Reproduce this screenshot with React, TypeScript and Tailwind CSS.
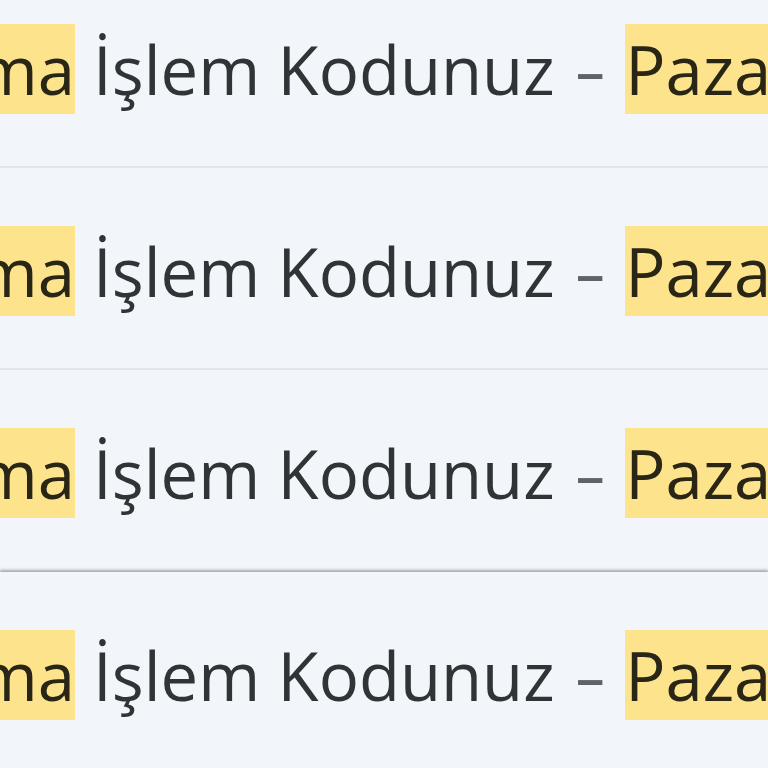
const rows = [0, 1, 2, 3];

function Row({ hovered, last }: { hovered?: boolean; last?: boolean }) {
  return (
    <div
      className={
        "relative h-[202px] bg-[#f2f5fa] overflow-hidden " +
        (last ? "" : "border-b-2 border-[#e1e4e9] ") +
        (hovered ? "z-10 shadow-[0_-2px_3px_0_rgba(60,64,67,0.35)]" : "")
      }
    >
      <div className="flex pt-[58px] text-[67px] leading-[90px] text-[#303437] whitespace-nowrap font-['Open_Sans',sans-serif]">
        <div className="w-[75px] shrink-0 flex justify-end">
          <span className="bg-[#fde48c] text-[#2a2616]">Pazarama</span>
        </div>
        <span className="ml-[18px]">İşlem Kodunuz</span>
        <span className="ml-[19px] inline-block origin-left scale-x-150 text-[#5f6368]">-</span>
        <span className="ml-[30px] bg-[#fde48c] text-[#2a2616]">Pazarama</span>
      </div>
    </div>
  );
}

export default function App() {
  return (
    <div className="w-[768px] h-[768px] overflow-hidden bg-[#f2f5fa]">
      <div className="-mt-[34px] flex flex-col">
        {rows.map((i) => (
          <Row key={i} hovered={i === 3} last={i === 3} />
        ))}
      </div>
    </div>
  );
}
